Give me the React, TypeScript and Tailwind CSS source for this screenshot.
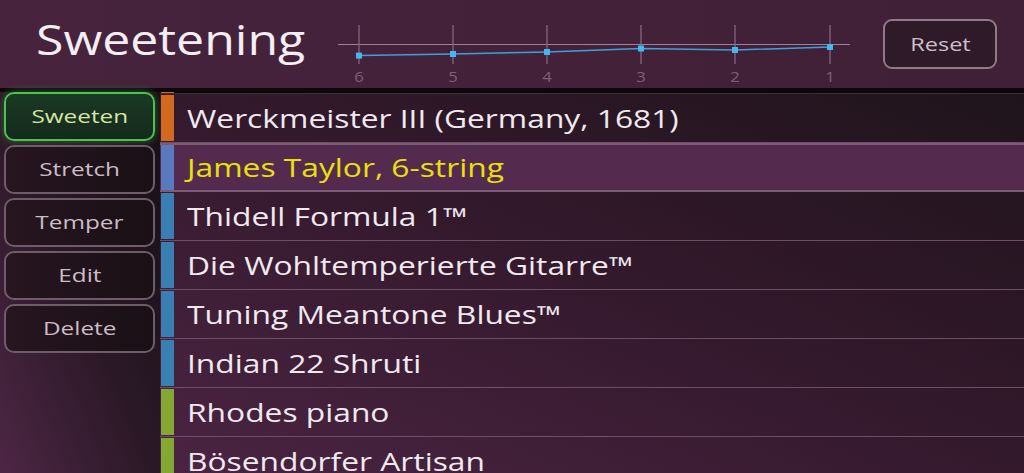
import React from 'react';

const FONT = { fontFamily: '"Open Sans", "Noto Sans", sans-serif' };

const presets = [
  { name: 'Werckmeister III (Germany, 1681)', color: 'bg-[#d2691f]' },
  { name: 'James Taylor, 6-string', color: 'bg-[#5b79bd]', selected: true },
  { name: 'Thidell Formula 1™', color: 'bg-[#3a7fb2]' },
  { name: 'Die Wohltemperierte Gitarre™', color: 'bg-[#3a7fb2]' },
  { name: 'Tuning Meantone Blues™', color: 'bg-[#3a7fb2]' },
  { name: 'Indian 22 Shruti', color: 'bg-[#3a7fb2]' },
  { name: 'Rhodes piano', color: 'bg-[#85a834]' },
  { name: 'Bösendorfer Artisan', color: 'bg-[#85a834]' },
];

const actions = ['Sweeten', 'Stretch', 'Temper', 'Edit', 'Delete'];

// offsets per string, 6 → 1
const points = [55.6, 54, 52, 48.5, 50, 47];

function OffsetChart() {
  const xs = [29, 123, 217, 311, 405, 500];
  return (
    <svg width="530" height="88" className="shrink-0">
      <line x1="8" y1="44.5" x2="520" y2="44.5" stroke="#a27f97" strokeWidth="1.2" />
      {xs.map((x, i) => (
        <g key={i}>
          <line x1={x} y1="25" x2={x} y2="64" stroke="#8d6b84" strokeWidth="1.2" />
          <text
            x={x}
            y="82"
            textAnchor="middle"
            fontSize="14"
            fill="#7d6077"
            style={FONT}
            transform={`translate(${x} 0) scale(1.2 1) translate(${-x} 0)`}
          >
            {6 - i}
          </text>
        </g>
      ))}
      <polyline
        points={xs.map((x, i) => `${x},${points[i]}`).join(' ')}
        fill="none"
        stroke="#3e9fdc"
        strokeWidth="1.5"
      />
      {xs.map((x, i) => (
        <rect key={i} x={x - 3} y={points[i] - 3} width="6" height="6" fill="#45b6f2" />
      ))}
    </svg>
  );
}

export default function App() {
  return (
    <div className="w-[1024px] h-[473px] overflow-hidden bg-[#1c1118] flex flex-col" style={FONT}>
      {/* Header */}
      <div className="h-[88px] shrink-0 flex items-start bg-gradient-to-r from-[#47233d] to-[#3f2036]">
        <div className="w-[330px] shrink-0 pl-[36px] pt-[18px]">
          <span className="inline-block origin-left scale-x-[1.19] text-[42px] leading-none text-[#f2eef1]">
            Sweetening
          </span>
        </div>
        <OffsetChart />
        <button className="ml-auto mr-[27px] mt-[19px] w-[114px] h-[50px] rounded-[9px] border-2 border-[#8f7a89] bg-[#2e1a29] text-[19px] text-[#cdbfca]">
          <span className="inline-block scale-x-[1.24]">Reset</span>
        </button>
      </div>
      <div className="h-[4px] shrink-0 bg-[#0c080b]" />

      <div className="flex flex-1 min-h-0">
        {/* Sidebar */}
        <div className="w-[160px] shrink-0 flex flex-col gap-[4px] pl-[4px] pr-[5px] bg-gradient-to-tr from-[#4d2645] via-[#2a1826] to-[#170f15]">
          {actions.map((a, i) =>
            i === 0 ? (
              <button
                key={a}
                className="h-[49px] rounded-[10px] border-2 border-[#4cc251] bg-gradient-to-b from-[#1a3a24] to-[#142a1c] text-[19px] text-[#d9e3a4] shadow-[0_0_8px_rgba(80,200,90,0.45)]"
              >
                <span className="inline-block scale-x-[1.28]">{a}</span>
              </button>
            ) : (
              <button
                key={a}
                className="h-[49px] rounded-[10px] border-2 border-[#6e5d69] bg-gradient-to-r from-[#27151f] to-[#1a1016] text-[19px] text-[#cbbdc7]"
              >
                <span className="inline-block scale-x-[1.28]">{a}</span>
              </button>
            )
          )}
        </div>

        {/* List */}
        <div className="flex-1 flex flex-col bg-gradient-to-tr from-[#4b2443] via-[#34192d] to-[#1f141b]">
          <div className="h-[1px] shrink-0 flex bg-[#0c080b]">
            <div className="ml-[1px] w-[13px] bg-[#d2691f]" />
          </div>
          <div className="h-[1px] shrink-0 bg-[#3c3038]" />
          {presets.map((p) =>
            p.selected ? (
              <div
                key={p.name}
                className="h-[49px] shrink-0 flex items-center border-y-2 border-[#7b5b75] bg-[#552a4f]"
              >
                <div className={`ml-[1px] w-[13px] h-full ${p.color}`} />
                <span className="ml-[13px] inline-block origin-left scale-x-[1.27] whitespace-nowrap text-[25px] leading-none text-[#e9e10a]">
                  {p.name}
                </span>
              </div>
            ) : (
              <div key={p.name} className="h-[49px] shrink-0 flex items-center border-b border-[#6d5066]">
                <div className={`ml-[1px] w-[13px] h-[46px] ${p.color}`} />
                <span className="ml-[13px] inline-block origin-left scale-x-[1.27] whitespace-nowrap text-[25px] leading-none text-[#efeaee]">
                  {p.name}
                </span>
              </div>
            )
          )}
        </div>
      </div>
    </div>
  );
}
